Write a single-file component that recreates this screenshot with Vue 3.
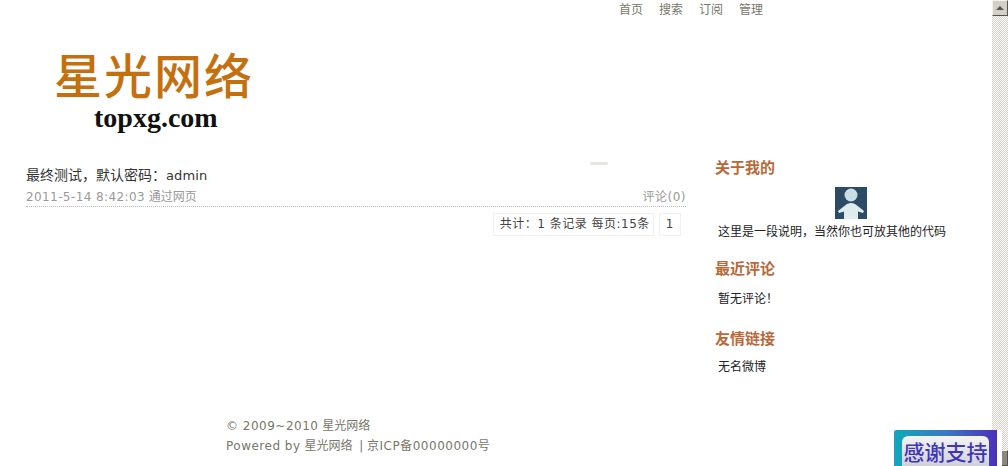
<script setup>
const navItems = ['首页', '搜索', '订阅', '管理']
const sideBlocks = [
  { title: '最近评论', text: '暂无评论！' },
  { title: '友情链接', text: '无名微博' },
]
</script>

<template>
  <div class="shell">
    <div class="page">
      <nav class="nav">
        <a v-for="item in navItems" :key="item">{{ item }}</a>
      </nav>
      <header class="logo">
        <div class="logo-cn">星光网络</div>
        <div class="logo-en">topxg.com</div>
      </header>
      <div class="columns">
        <main class="content">
          <i class="smudge"></i>
          <h2 class="post-title">最终测试，默认密码：<span class="admin">admin</span></h2>
          <div class="post-meta">
            <span><span class="date">2011-5-14 8:42:03</span> 通过网页</span>
            <span class="lat">评论(0)</span>
          </div>
          <div class="pager">
            <span class="pg">共计：1 条记录 每页:15条</span>
            <span class="pg pg-num">1</span>
          </div>
        </main>
        <aside class="side">
          <section class="about">
            <h3>关于我的</h3>
            <div class="avatar-row">
              <svg width="32" height="32" viewBox="0 0 32 32">
                <rect width="32" height="32" fill="#2c4c66" />
                <circle cx="16" cy="8" r="6.500" fill="#c9dfe4" />
                <path d="M16 16c-2.500 0-4.500 1-6 2.500l-7 5.500 1 2 5-1.500v7.500h14v-7.500l5 1.500 1-2-7-5.500c-1.500-1.500-3.500-2.500-6-2.500z" fill="#dfecee" />
              </svg>
            </div>
            <p>这里是一段说明，当然你也可放其他的代码</p>
          </section>
          <section v-for="b in sideBlocks" :key="b.title" class="block">
            <h3>{{ b.title }}</h3>
            <p>{{ b.text }}</p>
          </section>
        </aside>
      </div>
      <footer class="foot">
        <div><span class="lat">© 2009~2010</span> 星光网络</div>
        <div><span class="lat">Powered by</span> 星光网络 <span class="sep">|</span> <span class="lat">京ICP备00000000号</span></div>
      </footer>
    </div>
    <div class="scrollbar">
      <div class="sb-btn"><i class="up"></i></div>
      <div class="sb-btn"></div>
    </div>
    <div class="thanks"><span>感谢支持</span></div>
  </div>
</template>

<style scoped>
.shell {
  position: relative;
  display: flex;
  width: 1008px;
  height: 466px;
  overflow: hidden;
  background: #fff;
  font-family: "DejaVu Sans", "Noto Sans CJK SC", sans-serif;
  font-size: 12px;
  color: #333;
}
.page {
  width: 992px;
  flex: none;
}
.lat {
  letter-spacing: 0.5px;
}
.date {
  letter-spacing: 0.4px;
}
.nav {
  display: flex;
  gap: 16px;
  justify-content: flex-end;
  height: 21px;
  padding-right: 229px;
  line-height: 21px;
  color: #77776a;
}
.logo {
  height: 109px;
  padding: 24px 0 0 54px;
  box-sizing: border-box;
}
.logo-cn {
  font-family: "Noto Sans CJK SC", sans-serif;
  font-size: 48px;
  font-weight: 500;
  line-height: 56px;
  letter-spacing: 2px;
  color: #c4700f;
  width: 200px;
  white-space: nowrap;
}
.logo-en {
  margin: 7px 0 0 40px;
  font-family: "Liberation Serif", serif;
  font-size: 28px;
  line-height: 20px;
  font-weight: bold;
  color: #111;
}
.columns {
  display: flex;
  height: 273px;
}
.content {
  position: relative;
  width: 660px;
  margin-left: 26px;
  padding-top: 34px;
  box-sizing: border-box;
}
.smudge {
  position: absolute;
  left: 564px;
  top: 32px;
  width: 18px;
  height: 3px;
  border-radius: 2px;
  background: #e6e6e0;
}
.post-title {
  margin: 0;
  font-size: 14px;
  font-weight: normal;
  line-height: 22px;
  color: #333;
}
.admin {
  font-size: 13px;
  letter-spacing: 0.1px;
}
.post-meta {
  display: flex;
  justify-content: space-between;
  margin-top: 2px;
  line-height: 17px;
  color: #999;
  border-bottom: 1px dotted #bbb;
}
.pager {
  display: flex;
  justify-content: flex-end;
  gap: 5px;
  margin: 6px 5px 0 0;
  letter-spacing: 0.5px;
}
.pg {
  padding: 0 3px 0 6px;
  line-height: 21px;
  border: 1px solid #f0f0f0;
  color: #444;
}
.pg-num {
  padding: 0 6px;
}
.side {
  margin-left: 29px;
  width: 240px;
  padding-top: 27px;
}
.side h3 {
  margin: 0;
  font-family: "Noto Sans CJK SC", sans-serif;
  font-size: 15px;
  font-weight: bold;
  line-height: 20px;
  color: #b8693a;
}
.side p {
  margin: 0 0 0 3px;
  line-height: 18px;
  color: #222;
  white-space: nowrap;
}
.avatar-row {
  display: flex;
  margin: 10px 0 4px 120px;
}
.block {
  margin-top: 17px;
}
.block p {
  margin-top: 12px;
}
.block:last-child {
  margin-top: 20px;
}
.block:last-child p {
  margin-top: 10px;
}
.foot {
  padding: 13px 0 0 226px;
  line-height: 20px;
  color: #77776a;
}
.sep {
  margin-left: 3px;
}
.scrollbar {
  flex: 1;
  display: flex;
  flex-direction: column;
  justify-content: space-between;
  background-color: #fff;
  background-image: conic-gradient(#d4d0c8 25%, #fff 0 50%, #d4d0c8 0 75%, #fff 0);
  background-size: 2px 2px;
}
.sb-btn {
  height: 16px;
  display: flex;
  align-items: center;
  justify-content: center;
  background: #8a8880;
  border: 1px solid;
  border-color: #f4f2ee #55524c #55524c #f4f2ee;
  box-sizing: border-box;
}
.sb-btn:first-child {
  background: #d4d0c8;
}
.up {
  border: 4px solid transparent;
  border-top: 0;
  border-bottom-color: #555;
}
.thanks {
  position: absolute;
  left: 894px;
  top: 430px;
  width: 108px;
  height: 36px;
  padding: 6px 8px 0 7px;
  box-sizing: border-box;
  background: linear-gradient(90deg, #10a8b8, #3a78c4 50%, #4a30b8);
  background-clip: padding-box;
  border-left: 1px solid #3c8cd8;
  border-right: 5px solid #fff;
  border-radius: 2px 0 0 0;
}
.thanks span {
  display: block;
  height: 30px;
  border-radius: 6px 6px 0 0;
  background: linear-gradient(#f4f4f6, #d0d0d8);
  font-family: "Noto Sans CJK SC", sans-serif;
  font-size: 21px;
  font-weight: 500;
  line-height: 30px;
  text-align: center;
  color: #3f35b8;
  white-space: nowrap;
}
</style>
